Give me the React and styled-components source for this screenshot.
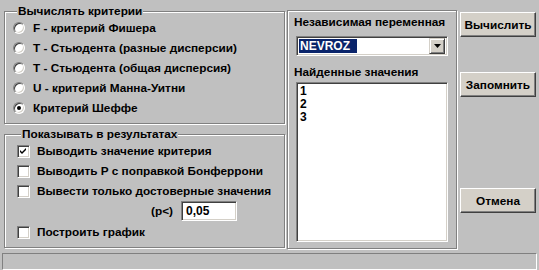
import styled, { createGlobalStyle } from "styled-components"

const GlobalStyle = createGlobalStyle`
    html, body {
        margin: 0;
        padding: 0;
        background: #c0c0c0;
    }
    body {
        width: 539px;
        height: 270px;
        overflow: hidden;
        font-family: "Liberation Sans", Arial, sans-serif;
        font-size: 11.8px;
        font-weight: 700;
        color: #000;
    }
`

const criteria = [
    "F - критерий Фишера",
    "T - Стьюдента (разные дисперсии)",
    "T - Стьюдента (общая дисперсия)",
    "U - критерий Манна-Уитни",
    "Критерий Шеффе",
]

export default function App() {
    return (
        <Window>
            <GlobalStyle />
            <Main>
                <LeftColumn>
                    <Group $height={120}>
                        <legend>Вычислять критерии</legend>
                        {criteria.map((c, i) => (
                            <Radio key={c}>
                                <RadioDot $checked={i === 4} />
                                <span>{c}</span>
                            </Radio>
                        ))}
                    </Group>
                    <Group $height={121} $indent={12}>
                        <legend>Показывать в результатах</legend>
                        <Check>
                            <CheckBox>
                                <svg width="7" height="7" viewBox="0 0 7 7">
                                    <path d="M0 2 L2 4 L6 0 V2 L2 6 L0 4 Z" fill="#000" />
                                </svg>
                            </CheckBox>
                            <span>Выводить значение критерия</span>
                        </Check>
                        <Check>
                            <CheckBox />
                            <span>Выводить P с поправкой Бонферрони</span>
                        </Check>
                        <Check>
                            <CheckBox />
                            <span>Вывести только достоверные значения</span>
                        </Check>
                        <PRow>
                            <span>(p&lt;)</span>
                            <TextInput>0,05</TextInput>
                        </PRow>
                        <Check>
                            <CheckBox />
                            <span>Построить график</span>
                        </Check>
                    </Group>
                </LeftColumn>

                <Panel>
                    <Label>Независимая переменная</Label>
                    <Combo>
                        <Selected>NEVROZ</Selected>
                        <DropButton>
                            <svg width="7" height="4" viewBox="0 0 7 4">
                                <path d="M0 0 H7 L3.5 4 Z" fill="#000" />
                            </svg>
                        </DropButton>
                    </Combo>
                    <Label className="second">Найденные значения</Label>
                    <List>
                        <div>1</div>
                        <div>2</div>
                        <div>3</div>
                    </List>
                </Panel>

                <Buttons>
                    <Button>Вычислить</Button>
                    <Button className="remember">Запомнить</Button>
                    <Button className="cancel">Отмена</Button>
                </Buttons>
            </Main>
            <StatusBar />
        </Window>
    )
}

const Window = styled.div`
    display: flex;
    flex-direction: column;
    width: 539px;
    height: 270px;
`

const Main = styled.div`
    display: flex;
    height: 253px;
    padding: 4px 0 0 4px;
    box-sizing: border-box;
`

const LeftColumn = styled.div`
    display: flex;
    flex-direction: column;
    gap: 3px;
    width: 281px;
`

const etched = `
    border: 1px solid #808080;
    box-shadow: 1px 1px 0 #fff, inset 1px 1px 0 #fff;
`

const Group = styled.fieldset`
    ${etched}
    margin: 0;
    padding: 0 0 0 ${p => p.$indent || 8}px;
    height: ${p => p.$height}px;
    box-sizing: border-box;
    display: flex;
    flex-direction: column;

    legend {
        padding: 0 1px;
        margin-left: 4px;
        line-height: 14px;
        background: #c0c0c0;
    }
`

const Radio = styled.div`
    display: flex;
    align-items: center;
    gap: 8px;
    height: 20px;
`

const RadioDot = styled.div`
    width: 12px;
    height: 12px;
    border-radius: 50%;
    box-sizing: border-box;
    border: 1px solid;
    border-color: #808080 #fff #fff #808080;
    background: #fff;
    box-shadow: inset 1px 1px 0 #404040, inset -1px -1px 0 #d4d0c8;
    display: flex;
    align-items: center;
    justify-content: center;
    flex-shrink: 0;

    &::after {
        content: "";
        width: 4px;
        height: 4px;
        border-radius: 50%;
        background: ${p => (p.$checked ? "#000" : "transparent")};
    }
`

const Check = styled.div`
    display: flex;
    align-items: center;
    gap: 7px;
    height: 20px;
`

const CheckBox = styled.div`
    width: 13px;
    height: 13px;
    box-sizing: border-box;
    border: 1px solid;
    border-color: #808080 #fff #fff #808080;
    background: #fff;
    box-shadow: inset 1px 1px 0 #404040, inset -1px -1px 0 #d4d0c8;
    display: flex;
    align-items: center;
    justify-content: center;
    flex-shrink: 0;
`

const PRow = styled.div`
    display: flex;
    align-items: center;
    height: 20px;
    margin: 0 0 1px 134px;
    gap: 8px;
`

const sunken = `
    box-sizing: border-box;
    background: #fff;
    border: 1px solid;
    border-color: #808080 #fff #fff #808080;
    box-shadow: inset 1px 1px 0 #404040, inset -1px -1px 0 #d4d0c8;
`

const TextInput = styled.div`
    ${sunken}
    width: 56px;
    height: 20px;
    padding: 0 4px;
    line-height: 18px;
    font-size: 12px;
`

const Panel = styled.div`
    ${etched}
    box-sizing: border-box;
    margin: 6px 0 0 2px;
    width: 170px;
    height: 239px;
    padding: 4px 0 0 8px;
    display: flex;
    flex-direction: column;

    .second {
        margin-top: 9px;
    }
`

const Label = styled.div`
    line-height: 14px;
    margin-left: -2px;
`

const Combo = styled.div`
    ${sunken}
    margin-top: 7px;
    width: 152px;
    height: 20px;
    padding: 2px;
    display: flex;
    align-items: center;
    justify-content: space-between;
`

const Selected = styled.div`
    background: #0a246a;
    color: #fff;
    font-size: 12px;
    line-height: 14px;
    padding: 0 2px 0 1px;
    width: 55px;
`

const DropButton = styled.div`
    width: 16px;
    height: 16px;
    box-sizing: border-box;
    background: #d4d0c8;
    border: 1px solid;
    border-color: #d4d0c8 #404040 #404040 #d4d0c8;
    box-shadow: inset 1px 1px 0 #fff, inset -1px -1px 0 #808080;
    display: flex;
    align-items: center;
    justify-content: center;
`

const List = styled.div`
    ${sunken}
    margin-top: 3px;
    width: 152px;
    height: 160px;
    padding: 2px 3px;
    font-size: 12px;
    line-height: 13px;
`

const Buttons = styled.div`
    display: flex;
    flex-direction: column;
    margin: 8px 0 0 3px;

    .remember {
        margin-top: 35px;
    }

    .cancel {
        margin-top: 91px;
    }
`

const Button = styled.button`
    width: 76px;
    height: 25px;
    box-sizing: border-box;
    background: #d4d0c8;
    border: 1px solid;
    border-color: #fff #404040 #404040 #fff;
    box-shadow: inset -1px -1px 0 #808080;
    font-family: "Liberation Sans", Arial, sans-serif;
    font-size: 11.8px;
    font-weight: 700;
    color: #000;
    padding: 0;
`

const StatusBar = styled.div`
    height: 17px;
    margin: 0 2px;
    box-sizing: border-box;
    border-top: 1px solid #808080;
    border-left: 1px solid #808080;
    border-bottom: 1px solid #fff;
    border-right: 1px solid #fff;
`
